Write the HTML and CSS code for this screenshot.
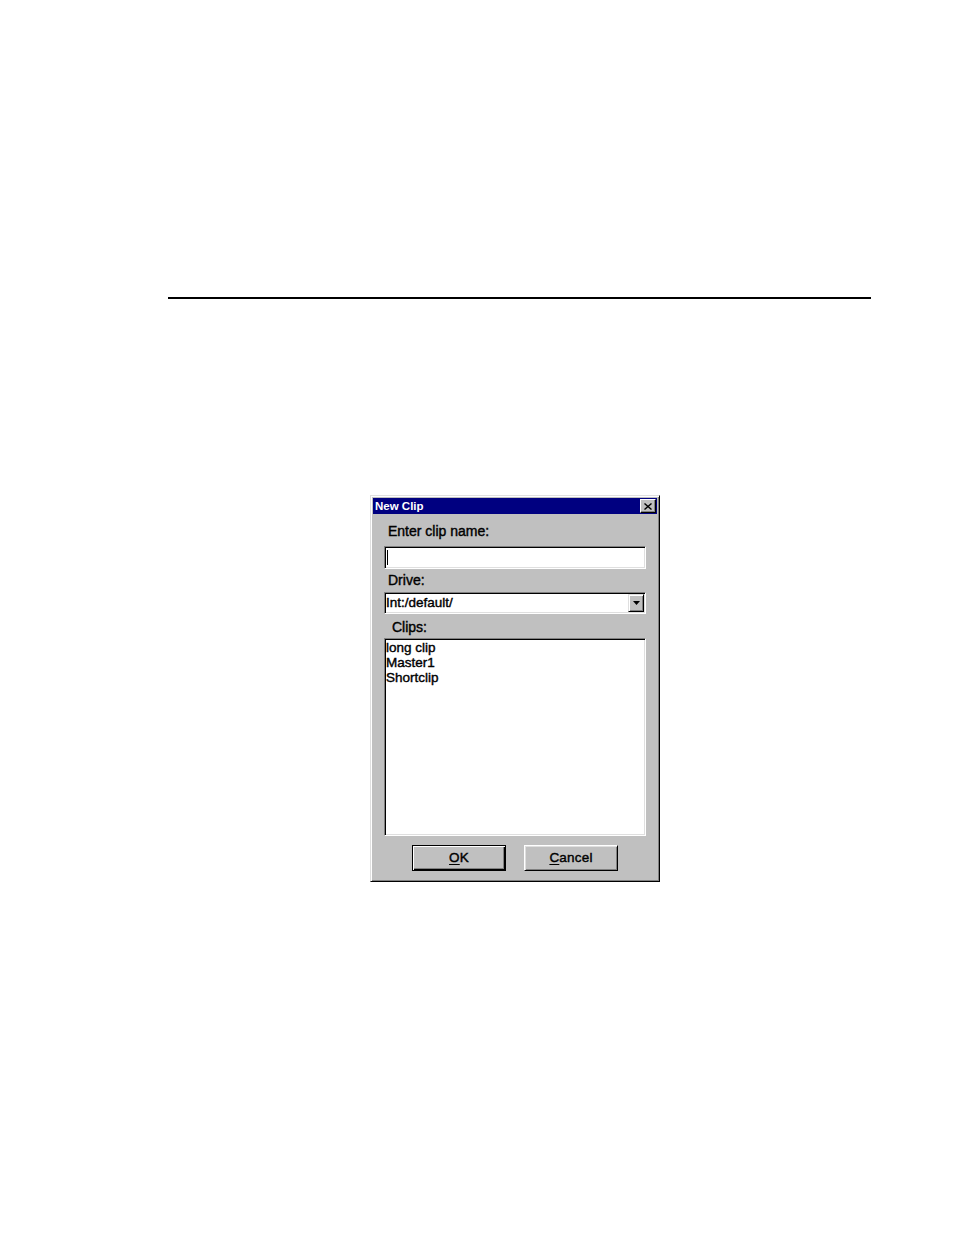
FILE: index.html
```html
<!DOCTYPE html>
<html>
<head>
<meta charset="utf-8">
<link rel="stylesheet" href="styles.css">
</head>
<body>
<div class="page">
  <div class="rule"></div>
  <div class="dialog">
    <div class="titlebar">
      <span class="title">New Clip</span>
      <span class="close">
        <svg width="8" height="7" viewBox="0 0 8 7"><path d="M0.5 0.5 L7.5 6.5 M7.5 0.5 L0.5 6.5" stroke="#000" stroke-width="1.4" fill="none"/></svg>
      </span>
    </div>
    <div class="content">
      <div class="label l-name">Enter clip name:</div>
      <div class="field input"><span class="caret"></span></div>
      <div class="label l-drive">Drive:</div>
      <div class="field combo">
        <span class="combo-text">Int:/default/</span>
        <span class="drop"><svg width="7" height="4" viewBox="0 0 7 4"><path d="M0 0 H7 L3.5 4 Z" fill="#000"/></svg></span>
      </div>
      <div class="label l-clips">Clips:</div>
      <div class="field list">
        <div class="item">long clip</div>
        <div class="item">Master1</div>
        <div class="item">Shortclip</div>
      </div>
      <div class="buttons">
        <div class="btn default"><span class="btn-in"><u>O</u>K</span></div>
        <div class="btn"><span class="btn-in"><u>C</u>ancel</span></div>
      </div>
    </div>
  </div>
</div>
</body>
</html>
```
FILE: styles.css
```css
html, body {
  margin: 0;
  padding: 0;
  background: #fff;
}
.page {
  width: 954px;
  height: 1235px;
  overflow: hidden;
  position: relative;
  font-family: "Liberation Sans", Arial, sans-serif;
  color: #000;
}
.rule {
  margin: 297px 0 0 168px;
  width: 703px;
  height: 2px;
  background: #000;
}
.dialog {
  margin: 196px 0 0 370px;
  width: 290px;
  height: 387px;
  box-sizing: border-box;
  background: #c0c0c0;
  border: 1px solid;
  border-color: #dfdfdf #000 #000 #dfdfdf;
  box-shadow: inset 1px 1px #fff, inset -1px -1px #808080;
  padding: 2px;
}
.titlebar {
  height: 16px;
  background: #000080;
  display: flex;
  align-items: center;
  justify-content: space-between;
  padding: 0 1px 0 2px;
}
.title {
  color: #fff;
  font-weight: bold;
  font-size: 11.5px;
  line-height: 16px;
}
.close {
  width: 16px;
  height: 14px;
  box-sizing: border-box;
  background: #c0c0c0;
  border: 1px solid;
  border-color: #fff #000 #000 #fff;
  box-shadow: inset -1px -1px #808080;
  display: flex;
  align-items: center;
  justify-content: center;
}
.content {
  padding: 0 11px;
}
.label {
  font-size: 14px;
  line-height: 16px;
  height: 16px;
  margin-left: 4px;
  -webkit-text-stroke: 0.4px #000;
}
.l-name { margin-top: 9px; }
.l-drive { margin-top: 3px; }
.l-clips { margin-top: 5px; margin-left: 8px; }
.field {
  background: #fff;
  box-sizing: border-box;
  border: 1px solid;
  border-color: #808080 #fff #fff #808080;
  box-shadow: inset 1px 1px #000, inset -1px -1px #dfdfdf;
}
.input {
  margin-top: 7px;
  height: 23px;
  padding: 3px 0 0 2px;
}
.caret {
  display: block;
  width: 1px;
  height: 15px;
  background: #000;
}
.combo {
  margin-top: 4px;
  height: 22px;
  display: flex;
  align-items: center;
  justify-content: space-between;
  padding: 0 1px 0 1px;
}
.combo-text {
  font-size: 13.5px;
  line-height: 16px;
  padding-left: 0;
  -webkit-text-stroke: 0.4px #000;
}
.drop {
  width: 16px;
  height: 18px;
  box-sizing: border-box;
  background: #c0c0c0;
  border: 1px solid;
  border-color: #dfdfdf #000 #000 #dfdfdf;
  box-shadow: inset 1px 1px #fff, inset -1px -1px #808080;
  display: flex;
  align-items: center;
  justify-content: center;
}
.list {
  margin-top: 3px;
  height: 198px;
  padding: 1px 0 0 1px;
}
.item {
  font-size: 13.5px;
  line-height: 15px;
  height: 15px;
  -webkit-text-stroke: 0.4px #000;
}
.buttons {
  margin-top: 9px;
  display: flex;
  justify-content: center;
  gap: 18px;
}
.btn {
  width: 94px;
  height: 26px;
  box-sizing: border-box;
  background: #c0c0c0;
  border: 1px solid;
  border-color: #fff #000 #000 #fff;
  box-shadow: inset 1px 1px #dfdfdf, inset -1px -1px #808080;
  display: flex;
  align-items: center;
  justify-content: center;
}
.btn.default {
  border: 1px solid #000;
  box-shadow: inset 1px 1px #fff, inset -1px -1px #000, inset -2px -2px #808080;
}
.btn-in {
  font-size: 13.5px;
  line-height: 16px;
  letter-spacing: 0.2px;
  -webkit-text-stroke: 0.4px #000;
}
.btn-in u {
  text-decoration-thickness: 1px;
  text-underline-offset: 2px;
}
```
